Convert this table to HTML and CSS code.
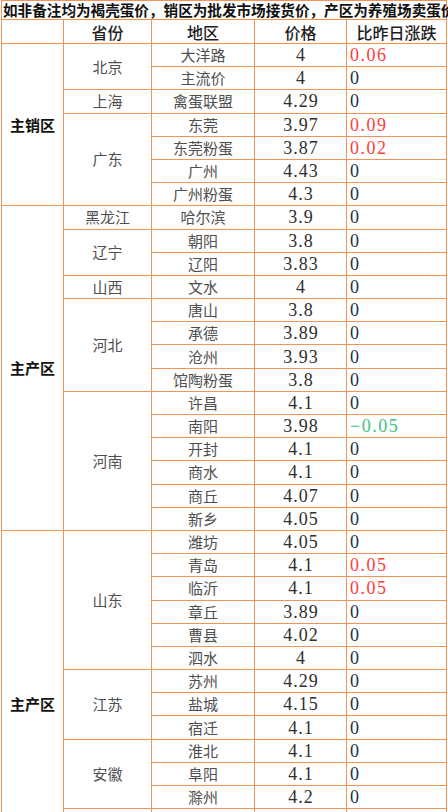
FILE: index.html
```html
<!DOCTYPE html>
<html lang="zh">
<head>
<meta charset="utf-8">
<link rel="stylesheet" href="styles.css">
</head>
<body>
<div class="wrap">
<table class="price">
<colgroup><col class="c1"><col class="c2"><col class="c3"><col class="c4"><col class="c5"></colgroup>
<tr class="title"><td colspan="5">如非备注均为褐壳蛋价，销区为批发市场接货价，产区为养殖场卖蛋价</td></tr>
<tr class="head"><th></th><th>省份</th><th>地区</th><th>价格</th><th>比昨日涨跌</th></tr>

<tr><td class="zone" rowspan="7">主销区</td><td class="prov" rowspan="2">北京</td><td class="city">大洋路</td><td class="num">4</td><td class="chg up">0.06</td></tr>
<tr><td class="city">主流价</td><td class="num">4</td><td class="chg">0</td></tr>
<tr><td class="prov">上海</td><td class="city">禽蛋联盟</td><td class="num">4.29</td><td class="chg">0</td></tr>
<tr><td class="prov" rowspan="4">广东</td><td class="city">东莞</td><td class="num">3.97</td><td class="chg up">0.09</td></tr>
<tr><td class="city">东莞粉蛋</td><td class="num">3.87</td><td class="chg up">0.02</td></tr>
<tr><td class="city">广州</td><td class="num">4.43</td><td class="chg">0</td></tr>
<tr><td class="city">广州粉蛋</td><td class="num">4.3</td><td class="chg">0</td></tr>

<tr><td class="zone" rowspan="14">主产区</td><td class="prov">黑龙江</td><td class="city">哈尔滨</td><td class="num">3.9</td><td class="chg">0</td></tr>
<tr><td class="prov" rowspan="2">辽宁</td><td class="city">朝阳</td><td class="num">3.8</td><td class="chg">0</td></tr>
<tr><td class="city">辽阳</td><td class="num">3.83</td><td class="chg">0</td></tr>
<tr><td class="prov">山西</td><td class="city">文水</td><td class="num">4</td><td class="chg">0</td></tr>
<tr><td class="prov" rowspan="4">河北</td><td class="city">唐山</td><td class="num">3.8</td><td class="chg">0</td></tr>
<tr><td class="city">承德</td><td class="num">3.89</td><td class="chg">0</td></tr>
<tr><td class="city">沧州</td><td class="num">3.93</td><td class="chg">0</td></tr>
<tr><td class="city">馆陶粉蛋</td><td class="num">3.8</td><td class="chg">0</td></tr>
<tr><td class="prov" rowspan="6">河南</td><td class="city">许昌</td><td class="num">4.1</td><td class="chg">0</td></tr>
<tr><td class="city">南阳</td><td class="num">3.98</td><td class="chg down">−0.05</td></tr>
<tr><td class="city">开封</td><td class="num">4.1</td><td class="chg">0</td></tr>
<tr><td class="city">商水</td><td class="num">4.1</td><td class="chg">0</td></tr>
<tr><td class="city">商丘</td><td class="num">4.07</td><td class="chg">0</td></tr>
<tr><td class="city">新乡</td><td class="num">4.05</td><td class="chg">0</td></tr>

<tr><td class="zone" rowspan="15">主产区</td><td class="prov" rowspan="6">山东</td><td class="city">潍坊</td><td class="num">4.05</td><td class="chg">0</td></tr>
<tr><td class="city">青岛</td><td class="num">4.1</td><td class="chg up">0.05</td></tr>
<tr><td class="city">临沂</td><td class="num">4.1</td><td class="chg up">0.05</td></tr>
<tr><td class="city">章丘</td><td class="num">3.89</td><td class="chg">0</td></tr>
<tr><td class="city">曹县</td><td class="num">4.02</td><td class="chg">0</td></tr>
<tr><td class="city">泗水</td><td class="num">4</td><td class="chg">0</td></tr>
<tr><td class="prov" rowspan="3">江苏</td><td class="city">苏州</td><td class="num">4.29</td><td class="chg">0</td></tr>
<tr><td class="city">盐城</td><td class="num">4.15</td><td class="chg">0</td></tr>
<tr><td class="city">宿迁</td><td class="num">4.1</td><td class="chg">0</td></tr>
<tr><td class="prov" rowspan="3">安徽</td><td class="city">淮北</td><td class="num">4.1</td><td class="chg">0</td></tr>
<tr><td class="city">阜阳</td><td class="num">4.1</td><td class="chg">0</td></tr>
<tr><td class="city">滁州</td><td class="num">4.2</td><td class="chg">0</td></tr>
<tr><td class="prov" rowspan="3"></td><td class="city"></td><td class="num"></td><td class="chg"></td></tr>
<tr><td class="city"></td><td class="num"></td><td class="chg"></td></tr>
<tr><td class="city"></td><td class="num"></td><td class="chg"></td></tr>
</table>
</div>
</body>
</html>
```

FILE: styles.css
```css
html, body {
  margin: 0;
  padding: 0;
  background: #ffffff;
  overflow: hidden;
}
.wrap {
  padding-left: 1px;
}
.price {
  border-collapse: collapse;
  table-layout: fixed;
  width: 445px;
  font-family: "Liberation Serif", "Noto Sans CJK SC", serif;
  color: #3a3a3a;
}
.c1 { width: 62px; }
.c2 { width: 88px; }
.c3 { width: 103px; }
.c4 { width: 92px; }
.c5 { width: 100px; }
.price td, .price th {
  border: 1px solid #f0945a;
  padding: 0;
  height: 22.2px;
  line-height: 20px;
  text-align: center;
  vertical-align: middle;
}
.title td {
  height: 18px;
  line-height: 18px;
  text-align: left;
  white-space: nowrap;
  overflow: visible;
  font-family: "Noto Sans CJK SC", sans-serif;
  font-weight: bold;
  font-size: 14.6px;
  color: #111;
  padding-left: 1px;
}
.head th {
  height: 23px;
  font-family: "Noto Sans CJK SC", sans-serif;
  font-size: 16px;
  font-weight: 500;
  color: #1e1e1e;
}
.zone {
  font-family: "Noto Sans CJK SC", sans-serif;
  font-size: 15px;
  font-weight: bold;
  color: #111;
}
.prov, .city {
  font-family: "Noto Sans CJK SC", sans-serif;
  font-size: 15px;
  color: #4f4f4f;
}
.price td.num {
  font-size: 18px;
  letter-spacing: 1px;
  padding-left: 1px;
  color: #2e2e2e;
}
.price td.chg {
  text-align: left;
  padding-left: 3px;
  font-size: 18px;
  color: #233040;
}
.price td.up {
  color: #ff3b3b;
  letter-spacing: 1.5px;
}
.price td.down {
  color: #3cc47c;
  letter-spacing: 1.5px;
}
```
